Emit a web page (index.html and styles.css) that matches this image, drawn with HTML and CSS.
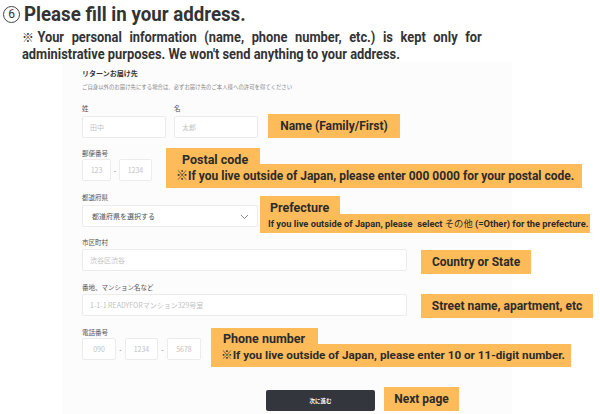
FILE: index.html
```html
<!DOCTYPE html>
<html lang="ja">
<head>
<meta charset="utf-8">
<link rel="stylesheet" href="styles.css">
</head>
<body>
<h1 class="title"><span class="circled">6</span><span class="title-text">Please fill in your address.</span></h1>
<p class="note"><span class="kome">※</span>Your personal information (name, phone number, etc.) is kept only for administrative purposes. We won't send anything to your address.</p>

<section class="form">
  <div class="form-head">リターンお届け先</div>
  <div class="form-sub">ご自身以外のお届け先にする場合は、必ずお届け先のご本人様への許可を得てください</div>

  <div class="row row-name">
    <div class="pair">
      <div class="field">
        <div class="label">姓</div>
        <div class="input w84">田中</div>
      </div>
      <div class="field">
        <div class="label">名</div>
        <div class="input w84">太郎</div>
      </div>
    </div>
    <div class="tag tag-name">Name (Family/First)</div>
  </div>

  <div class="row row-postal">
    <div class="field">
      <div class="label">郵便番号</div>
      <div class="multi">
        <div class="input w29 c">123</div><span class="dash">-</span><div class="input w33 c">1234</div>
      </div>
    </div>
    <div class="callout co-postal">
      <div class="co-tab">Postal code</div>
      <div class="co-bar">※If you live outside of Japan, please enter 000 0000 for your postal code.</div>
    </div>
  </div>

  <div class="row row-pref">
    <div class="field">
      <div class="label">都道府県</div>
      <div class="input select">都道府県を選択する
        <svg class="chev" width="9" height="6" viewBox="0 0 9 6"><path d="M1 1l3.5 3.5L8 1" fill="none" stroke="#888" stroke-width="1"/></svg>
      </div>
    </div>
    <div class="callout co-pref">
      <div class="co-tab">Prefecture</div>
      <div class="co-bar">If you live outside of Japan, please&nbsp; select <span class="jp">その他</span> (=Other) for the prefecture.</div>
    </div>
  </div>

  <div class="row row-city">
    <div class="field">
      <div class="label">市区町村</div>
      <div class="input wide">渋谷区渋谷</div>
    </div>
    <div class="tag tag-country">Country or State</div>
  </div>

  <div class="row row-street">
    <div class="field">
      <div class="label">番地、マンション名など</div>
      <div class="input wide">1-1-1 READYFORマンション329号室</div>
    </div>
    <div class="tag tag-street">Street name, apartment, etc</div>
  </div>

  <div class="row row-phone">
    <div class="field">
      <div class="label">電話番号</div>
      <div class="multi">
        <div class="input w34 c">090</div><span class="dash">-</span><div class="input w33 c">1234</div><span class="dash">-</span><div class="input w34 c">5678</div>
      </div>
    </div>
    <div class="callout co-phone">
      <div class="co-tab">Phone number</div>
      <div class="co-bar">※If you live outside of Japan, please enter 10 or 11-digit number.</div>
    </div>
  </div>

  <div class="row row-next">
    <button class="next-btn" type="button">次に進む</button>
    <div class="tag tag-next">Next page</div>
  </div>
</section>
</body>
</html>
```

FILE: styles.css
```css
* { box-sizing: border-box; }
html, body { margin: 0; padding: 0; background: #fff; }
body {
  width: 600px;
  height: 414px;
  overflow: hidden;
  font-family: Roboto, "Noto Sans CJK JP", sans-serif;
  color: #333;
}
.title {
  margin: 0;
  height: 29px;
  line-height: 29px;
  font-size: 21px;
  font-weight: 700;
  display: flex;
  align-items: center;
  padding-left: 3px;
  color: #333;
}
.title-text {
  display: inline-block;
  transform: scaleX(0.89);
  transform-origin: left center;
  white-space: nowrap;
}
.circled {
  width: 17px;
  height: 17px;
  border: 1.2px solid #444;
  border-radius: 50%;
  font-size: 12px;
  font-weight: 400;
  line-height: 15px;
  text-align: center;
  margin-right: 4px;
  flex: none;
}
.note {
  margin: 0 0 0 22px;
  width: 508px;
  font-size: 14.2px;
  line-height: 16px;
  font-weight: 700;
  text-align: justify;
  color: #333;
  transform: scaleX(0.905);
  transform-origin: left top;
}
.kome {
  display: inline-block;
  width: 17px;
  font-size: 13px;
  text-align: left;
}
.form {
  padding: 6px 0 0 82px;
  height: 353px;
  background: linear-gradient(to right, transparent 62px, #fcfcfc 62px, #fcfcfc 512px, transparent 512px);
  font-family: "Noto Sans CJK JP", Roboto, sans-serif;
}
.form-head {
  font-size: 7px;
  line-height: 10px;
  font-weight: 700;
  color: #333;
}
.form-sub {
  margin-top: 5px;
  font-size: 5.4px;
  line-height: 8px;
  color: #888;
  white-space: nowrap;
}
.row { display: flex; }
.pair { display: flex; gap: 8px; }
.label {
  font-size: 6.5px;
  line-height: 8px;
  color: #555;
  white-space: nowrap;
}
.input {
  height: 22px;
  margin-top: 4px;
  background: #fff;
  border: 1px solid #ececec;
  border-radius: 2px;
  font-size: 7px;
  line-height: 20px;
  color: #c2c2c2;
  padding-left: 7px;
  white-space: nowrap;
  position: relative;
}
.input.c { padding-left: 0; text-align: center; }
.w84 { width: 84px; }
.w29 { width: 29px; }
.w33 { width: 33px; }
.w34 { width: 34px; }
.wide { width: 325px; }
.multi { display: flex; align-items: flex-end; }
.multi .input { margin-top: 2px; }
.dash {
  width: 8px;
  text-align: center;
  font-size: 7px;
  line-height: 22px;
  color: #777;
}
.row-phone .dash { width: 9px; }
.select { width: 176px; color: #555; padding-left: 9px; }
.chev { position: absolute; right: 8px; top: 8px; }

.tag, .co-tab, .co-bar {
  background: #fdbb5a;
  font-family: Roboto, "Noto Sans CJK JP", sans-serif;
  font-weight: 700;
  color: #2b2b2b;
  white-space: nowrap;
}
.jp { font-family: "Noto Sans CJK JP", sans-serif; font-weight: 400; }
.tag {
  font-size: 12px;
  height: 24px;
  line-height: 24px;
  text-align: center;
}

.row-name { margin-top: 13px; align-items: flex-end; }
.tag-name { margin-left: 10px; width: 132px; }

.row-postal { margin-top: 11px; align-items: flex-start; }
.callout { display: flex; flex-direction: column; align-items: flex-start; }
.co-postal { margin: -1px 0 0 14px; }
.co-postal .co-tab { width: 94px; height: 16px; line-height: 24px; padding-left: 16px; font-size: 12.5px; }
.co-postal .co-bar { width: 416px; height: 24px; line-height: 24px; padding-left: 10px; font-size: 12px; }

.row-pref { margin-top: 5px; align-items: flex-start; }
.co-pref { margin: 3px 0 0 2px; }
.co-pref .co-tab { width: 80px; height: 18px; line-height: 24px; padding-left: 10px; font-size: 12.5px; }
.co-pref .co-bar { width: 330px; height: 19px; line-height: 19px; padding-left: 8px; font-size: 9.3px; }

.row-city { margin-top: 5px; align-items: flex-start; }
.row-city .input, .row-street .input { margin-top: 3px; }
.tag-country { margin: 12px 0 0 14px; width: 110px; }

.row-street { margin-top: 9px; align-items: flex-start; }
.tag-street { margin: 11px 0 0 14px; width: 172px; }

.row-phone { margin-top: 10px; align-items: flex-start; }
.co-phone { margin: 0 0 0 10px; }
.co-phone .co-tab { width: 107px; height: 16px; line-height: 22px; padding-left: 12px; font-size: 12.5px; }
.co-phone .co-bar { width: 360px; height: 23px; line-height: 22px; padding-left: 10px; font-size: 11.7px; }

.row-next { margin-top: 20px; padding-left: 184px; align-items: flex-start; }
.next-btn {
  margin-top: 3px;
  width: 109px;
  height: 21px;
  border: none;
  border-radius: 2px;
  background: #33373d;
  color: #fff;
  font-family: "Noto Sans CJK JP", sans-serif;
  font-size: 5.5px;
  font-weight: 700;
  padding: 0;
}
.tag-next { margin-left: 9px; width: 75px; }
```
